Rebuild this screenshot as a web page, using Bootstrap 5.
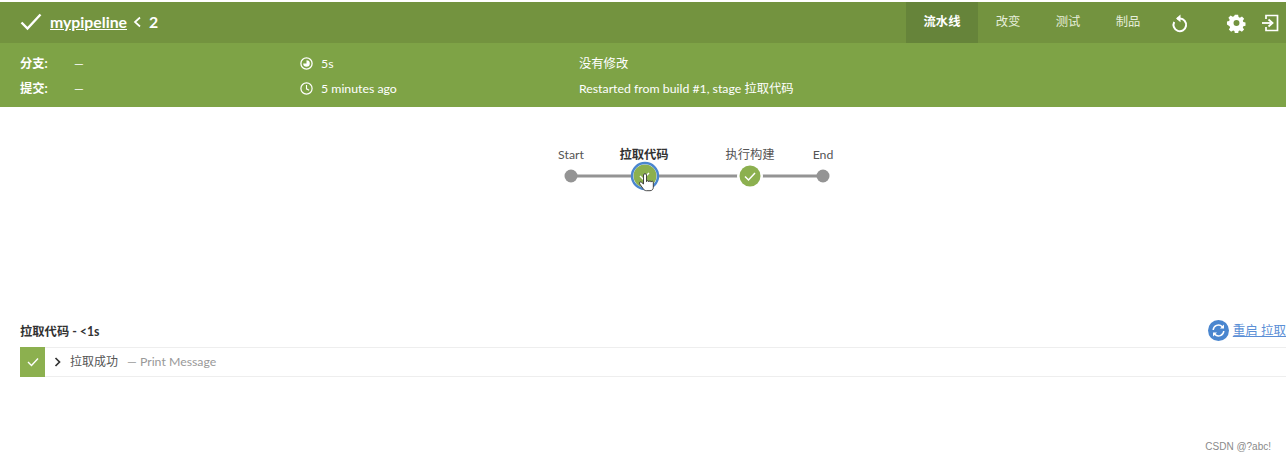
<!DOCTYPE html>
<html lang="zh">
<head>
  <meta charset="UTF-8">
  <meta name="viewport" content="width=device-width, initial-scale=1.0">
  <title>mypipeline 2</title>
  <link href="https://cdn.jsdelivr.net/npm/bootstrap@5.3.0/dist/css/bootstrap.min.css" rel="stylesheet">
  <style>
    html, body { height: 460px; overflow: hidden; }
    body {
      font-family: Lato, "Noto Sans CJK SC", sans-serif;
      font-size: 13px;
      color: #4a4a4a;
      background: #fff;
      padding-top: 2px;
      position: relative;
    }
    .run-top { height: 41px; background: #73933f; color: #fff; padding-left: 20px; }
    .run-title { font-size: 15.8px; font-weight: 700; line-height: 41px; padding-bottom: 2px; }
    .run-title a { color: #fff; }
    .run-title svg { margin-right: 8px; }
    .run-back { margin: 0 6px 0 6px; }
    .tab-link {
      height: 41px; line-height: 39px; color: #e6eeda; text-decoration: none;
      padding: 0 14px; font-size: 12.3px; width: 60px; text-align: center; white-space: nowrap;
    }
    .tab-link.is-on { background: #66843a; color: #fff; font-weight: 700; width: 72px; margin-right: 0; }
    .tab-tools { width: 128px; padding-left: 13px; padding-right: 7px; }
    .run-sub { height: 64px; background: #7ea346; color: #fff; padding: 9px 0 0 20px; font-size: 12.3px; }
    .sub-row { height: 25px; line-height: 24px; }
    .sub-label { width: 54px; font-weight: 700; }
    .sub-branch { width: 226px; }
    .sub-time { width: 279px; }
    .sub-time svg { margin-right: 8px; vertical-align: -2px; }
    .graph-box { height: 208px; position: relative; }
    .graph-box svg { position: absolute; left: 540px; top: 30px; }
    .graph-label { font-family: Lato, "Noto Sans CJK SC", sans-serif; font-size: 12.3px; fill: #555; text-anchor: middle; }
    .graph-label.is-on { font-weight: 700; fill: #333; }
    .stage-head { height: 32px; padding: 2px 0 0 20px; }
    .stage-name { font-weight: 700; font-size: 12.3px; color: #333; line-height: 29px; }
    .stage-restart { color: #5b8fd6; white-space: nowrap; font-size: 12.5px; line-height: 27px; height: 27px; }
    .stage-restart a { color: #5b8fd6; }
    .stage-restart svg { margin-right: 4px; flex: none; }
    .step-row {
      height: 30px; margin-left: 20px;
      border-top: 1px solid #eee; border-bottom: 1px solid #eee;
    }
    .step-ok { width: 25px; height: 30px; background: #8cb04f; }
    .step-arrow { margin: 0 8px 0 9px; }
    .step-name { color: #555; font-size: 12px; }
    .step-note { color: #999; font-size: 12.3px; margin-left: 9px; }
    .csdn-mark { position: absolute; right: 15px; top: 439px; font-family: "Liberation Sans", sans-serif; font-size: 10px; color: #8a8a8a; }
  </style>
</head>
<body>
  <div class="run-top d-flex justify-content-between">
    <div class="run-title d-flex align-items-center">
      <svg width="22" height="18" viewBox="0 0 22 18"><path d="M1.500 9.500l6 6L20.500 1.500" fill="none" stroke="#fff" stroke-width="2.400"/></svg>
      <a href="#">mypipeline</a>
      <svg class="run-back" width="8" height="12" viewBox="0 0 8 12"><path d="M7 1.500L2 6l5 4.500" fill="none" stroke="#fff" stroke-width="1.700"/></svg>
      <span>2</span>
    </div>
    <div class="d-flex align-items-center">
      <a class="tab-link is-on" href="#">流水线</a>
      <a class="tab-link" href="#">改变</a>
      <a class="tab-link" href="#">测试</a>
      <a class="tab-link" href="#">制品</a>
      <div class="tab-tools d-flex align-items-center justify-content-between">
        <svg width="18" height="20" viewBox="0 0 18 20"><path d="M3.200 9a6.300 6.300 0 1 0 5.800-3.400H6" fill="none" stroke="#fff" stroke-width="2"/><path d="M9.500 1.500L5 5.600l4.500 3.600z" fill="#fff"/></svg>
        <div class="d-flex align-items-center gap-3">
          <svg width="20" height="20" viewBox="0 0 20 20"><path fill="#fff" fill-rule="evenodd" d="M8.200 1h3.600l.5 2.600 1.500.7 2.300-1.400 2.400 2.600-1.500 2.200.6 1.500 2.400.6v3.400l-2.400.6-.6 1.500 1.400 2.200-2.400 2.500-2.200-1.400-1.500.6-.5 2.700H8.200l-.5-2.700-1.500-.6-2.200 1.400-2.500-2.500 1.400-2.200-.6-1.500L-.6 12V8.600l2.400-.6.6-1.500L1 4.500l2.500-2.600 2.200 1.400 1.500-.7zM10 7a3.300 3.300 0 1 0 0 6.600A3.300 3.300 0 0 0 10 7z" transform="translate(1.500 .8) scale(.9)"/></svg>
          <svg width="17" height="18" viewBox="0 0 17 18"><path d="M4 5V1.500h11.500v15H4V13" fill="none" stroke="#fff" stroke-width="1.700"/><path d="M0 9h9" stroke="#fff" stroke-width="1.800"/><path d="M6.500 5.500L10.500 9l-4 3.500" fill="none" stroke="#fff" stroke-width="1.800"/></svg>
        </div>
      </div>
    </div>
  </div>
  <div class="run-sub">
    <div class="sub-row d-flex">
      <div class="sub-label">分支:</div>
      <div class="sub-branch">—</div>
      <div class="sub-time"><svg width="13" height="13" viewBox="0 0 13 13"><circle cx="6.500" cy="6.500" r="5.600" fill="none" stroke="#fff" stroke-width="1.300"/><path d="M6.500 3.200a3.300 3.300 0 1 1-3.300 3.300h3.300z" fill="#fff"/></svg>5s</div>
      <div>没有修改</div>
    </div>
    <div class="sub-row d-flex">
      <div class="sub-label">提交:</div>
      <div class="sub-branch">—</div>
      <div class="sub-time"><svg width="13" height="13" viewBox="0 0 13 13"><circle cx="6.500" cy="6.500" r="5.600" fill="none" stroke="#fff" stroke-width="1.200"/><path d="M6.500 3v3.800l2.600 1.400" fill="none" stroke="#fff" stroke-width="1.100"/></svg>5 minutes ago</div>
      <div>Restarted from build #1, stage 拉取代码</div>
    </div>
  </div>
  <div class="graph-box">
    <svg width="310" height="70" viewBox="0 0 310 70">
      <text class="graph-label" x="31" y="22">Start</text>
      <text class="graph-label is-on" x="104" y="22">拉取代码</text>
      <text class="graph-label" x="210" y="22">执行构建</text>
      <text class="graph-label" x="283" y="22">End</text>
      <path d="M31 39H283" stroke="#949494" stroke-width="3"/>
      <circle cx="31" cy="39" r="6.500" fill="#949494"/>
      <circle cx="105" cy="39" r="12.500" fill="#8cb04f" stroke="#fff" stroke-width="2"/>
      <circle cx="105" cy="39" r="13" fill="none" stroke="#4a86cf" stroke-width="2.400"/>
      <circle cx="210" cy="39" r="13" fill="#fff"/>
      <circle cx="210" cy="39" r="10.500" fill="#8cb04f"/>
      <path d="M205 39.500l3.500 3.500 6.500-7" fill="none" stroke="#fff" stroke-width="1.500"/>
      <path d="M100 39l3 3 6-6" fill="none" stroke="#fff" stroke-width="1.500"/>
      <circle cx="283" cy="39" r="6.500" fill="#949494"/>
      <path d="M103.500 38v9l-2-1.700c-1.300-1-2.700.4-1.800 1.600l3.800 5.300c.8 1 1.700 1.500 3 1.500h3.500c2 0 3.300-1.400 3.300-3.300v-5c0-1.500-2-1.600-2.200-.3 0-1.500-2.100-1.600-2.300-.3 0-1.500-2.200-1.500-2.300-.1V38c0-1.700-3-1.700-3 0z" fill="#fff" stroke="#333" stroke-width="0.900"/>
    </svg>
  </div>
  <div class="stage-head d-flex justify-content-between">
    <div class="stage-name">拉取代码 - &lt;1s</div>
    <div class="stage-restart d-flex align-items-center">
      <svg width="21" height="21" viewBox="0 0 21 21"><circle cx="10.500" cy="10.500" r="10.500" fill="#4a86cf"/><path d="M5.200 10a5.300 5.300 0 0 1 9-3.400l1 1M15.800 11a5.300 5.300 0 0 1-9 3.400l-1-1" fill="none" stroke="#fff" stroke-width="1.500"/><path d="M16 4.500v4h-4zM5 16.500v-4h4z" fill="#fff"/></svg>
      <a href="#">重启&nbsp;拉取</a>
    </div>
  </div>
  <div class="step-row d-flex align-items-center">
    <div class="step-ok d-flex align-items-center justify-content-center">
      <svg width="12" height="10" viewBox="0 0 12 10"><path d="M1 5l3.500 3.500L11 1.500" fill="none" stroke="#fff" stroke-width="1.400"/></svg>
    </div>
    <svg class="step-arrow" width="8" height="10" viewBox="0 0 8 10"><path d="M1.500 1l4 4-4 4" fill="none" stroke="#333" stroke-width="1.700"/></svg>
    <span class="step-name">拉取成功</span>
    <span class="step-note">— Print Message</span>
  </div>
  <div class="csdn-mark">CSDN @?abc!</div>
  <script src="https://cdn.jsdelivr.net/npm/bootstrap@5.3.0/dist/js/bootstrap.bundle.min.js"></script>
</body>
</html>
